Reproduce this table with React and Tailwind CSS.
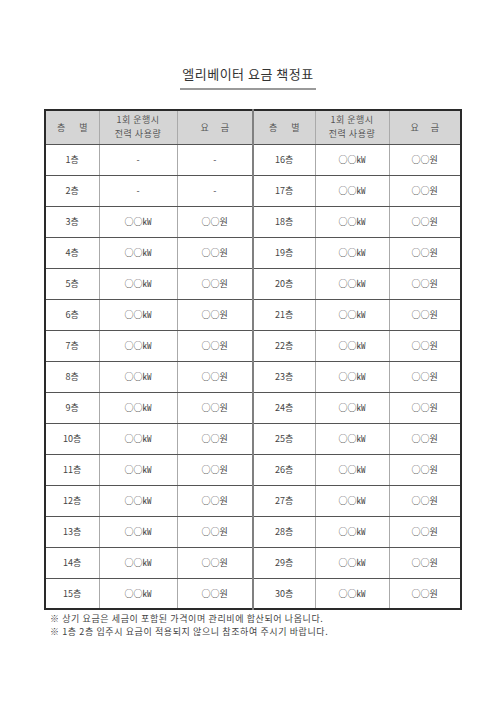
import React from "react";

const font = { fontFamily: '"Noto Sans CJK KR", "Noto Sans", sans-serif' };

export default function App() {
  const rows = [];
  for (let i = 1; i <= 15; i++) {
    const blank = i <= 2;
    rows.push({
      a: `${i}층`,
      b: blank ? "-" : "○○㎾",
      c: blank ? "-" : "○○원",
      d: `${i + 15}층`,
      e: "○○㎾",
      f: "○○원",
    });
  }
  const cell = "border-b border-[#555] text-center align-middle";
  return (
    <div className="w-[504px] h-[713px] bg-white text-[#444]" style={font}>
      <div className="pt-[66px] ml-[180px] w-[136px]">
        <div className="h-[16px] leading-[16px] text-[13px] text-center tracking-[0.5px] text-[#333]">
          엘리베이터 요금 책정표
        </div>
        <div className="mt-[6px] h-[2px] bg-[#9a9a9a]" />
      </div>
      <table className="mt-[19px] ml-[44px] w-[416px] border-collapse border-2 border-[#2a2a2a] text-[9px] table-fixed">
        <colgroup>
          <col className="w-[54px]" />
          <col className="w-[78px]" />
          <col className="w-[76px]" />
          <col className="w-[62px]" />
          <col className="w-[74px]" />
          <col className="w-[72px]" />
        </colgroup>
        <thead>
          <tr className="h-[34px] bg-[#d5d5d5] text-[#555]">
            <th className={`${cell} font-normal border-r border-r-[#aaa] tracking-[6px] pl-[6px]`}>층 별</th>
            <th className={`${cell} font-normal border-r border-r-[#aaa] leading-[14px] tracking-[0.5px]`}>
              1회 운행시<br />전력 사용량
            </th>
            <th className={`${cell} font-normal border-r-2 border-r-[#808080] tracking-[5px] pl-[5px]`}>요 금</th>
            <th className={`${cell} font-normal border-r border-r-[#aaa] tracking-[6px] pl-[6px]`}>층 별</th>
            <th className={`${cell} font-normal border-r border-r-[#aaa] leading-[14px] tracking-[0.5px]`}>
              1회 운행시<br />전력 사용량
            </th>
            <th className={`${cell} font-normal tracking-[5px] pl-[5px]`}>요 금</th>
          </tr>
        </thead>
        <tbody>
          {rows.map((r, i) => (
            <tr key={i} className="h-[31px]">
              <td className={`${cell} border-r border-r-[#aaa]`}>{r.a}</td>
              <td className={`${cell} border-r border-r-[#aaa]`}>{r.b}</td>
              <td className={`${cell} border-r-2 border-r-[#808080]`}>{r.c}</td>
              <td className={`${cell} border-r border-r-[#aaa]`}>{r.d}</td>
              <td className={`${cell} border-r border-r-[#aaa]`}>{r.e}</td>
              <td className={cell}>{r.f}</td>
            </tr>
          ))}
        </tbody>
      </table>
      <div className="mt-[2px] pl-[50px] text-[9px] leading-[13px] text-[#444] tracking-[0.6px]">
        <div>※ 상기 요금은 세금이 포함된 가격이며 관리비에 합산되어 나옵니다.</div>
        <div>※ 1층 2층 입주시 요금이 적용되지 않으니 참조하여 주시기 바랍니다.</div>
      </div>
    </div>
  );
}
